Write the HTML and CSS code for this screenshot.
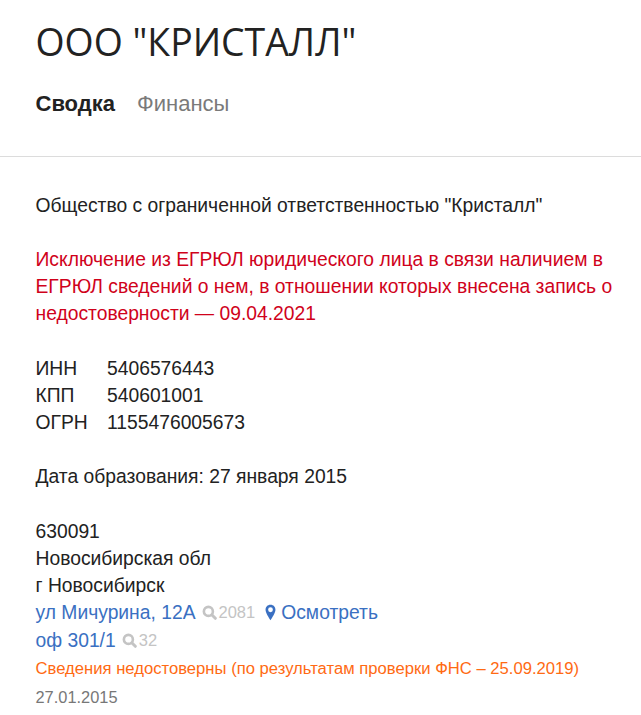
FILE: index.html
```html
<!DOCTYPE html>
<html lang="ru">
    <head>
        <meta charset="UTF-8">
        <meta name="viewport" content="width=device-width, initial-scale=1.0">
        <title>ООО "КРИСТАЛЛ"</title>
        <link rel="stylesheet" href="styles.css">
    </head>
    <body>
        <header class="head">
            <h1 class="title">ООО "КРИСТАЛЛ"</h1>
            <nav class="tabs">
                <a class="tab active" href="#">Сводка</a>
                <a class="tab" href="#">Финансы</a>
            </nav>
        </header>

        <main class="content">
            <p class="block">Общество с ограниченной ответственностью "Кристалл"</p>

            <p class="block status">Исключение из ЕГРЮЛ юридического лица в связи наличием в ЕГРЮЛ сведений о нем, в отношении которых внесена запись о недостоверности — 09.04.2021</p>

            <dl class="block codes">
                <dt>ИНН</dt><dd>5406576443</dd>
                <dt>КПП</dt><dd>540601001</dd>
                <dt>ОГРН</dt><dd>1155476005673</dd>
            </dl>

            <p class="block">Дата образования: 27 января 2015</p>

            <div class="address">
                <div>630091</div>
                <div>Новосибирская обл</div>
                <div>г Новосибирск</div>
                <div class="addr-row">
                    <a href="#">ул Мичурина, 12А</a>
                    <span class="count">
                        <svg class="ico-search" viewBox="0 0 16 16"><circle cx="6.8" cy="6.8" r="4.8" fill="none" stroke="currentColor" stroke-width="2.8"/><path d="M10.4 10.4 L14.2 14.2" stroke="currentColor" stroke-width="3.2" stroke-linecap="round"/></svg>2081</span>
                    <a class="map-link" href="#">
                        <svg class="ico-pin" viewBox="0 0 12 18"><path fill="currentColor" fill-rule="evenodd" d="M6 0.5C2.7 0.5 0.6 3 0.6 6 0.6 9.5 4.2 14.5 6 17.5 7.8 14.5 11.4 9.5 11.4 6 11.4 3 9.3 0.5 6 0.5ZM6 3.4A2.6 2.6 0 1 1 6 8.6 2.6 2.6 0 1 1 6 3.4Z"/></svg>Осмотреть</a>
                </div>
                <div class="addr-row">
                    <a href="#">оф 301/1</a>
                    <span class="count">
                        <svg class="ico-search" viewBox="0 0 16 16"><circle cx="6.8" cy="6.8" r="4.8" fill="none" stroke="currentColor" stroke-width="2.8"/><path d="M10.4 10.4 L14.2 14.2" stroke="currentColor" stroke-width="3.2" stroke-linecap="round"/></svg>32</span>
                </div>
                <div class="warn">Сведения недостоверны (по результатам проверки ФНС – 25.09.2019)</div>
                <div class="date">27.01.2015</div>
            </div>
        </main>
    </body>
</html>
```

FILE: styles.css
```css
*{
    margin: 0;
    padding: 0;
    box-sizing: border-box;
}

body{
    background: #fff;
    color: #222;
    font-family: "Liberation Sans", Arial, sans-serif;
    font-size: 19.3px;
    line-height: 27.2px;
    overflow: hidden;
}

a{
    color: #3a70c2;
    text-decoration: none;
}

.head{
    padding: 16px 35.5px 39px;
    border-bottom: 1px solid #dcdcdc;
}

.title{
    font-family: "Open Sans", sans-serif;
    font-size: 37.4px;
    font-weight: 400;
    line-height: 52px;
}

.tabs{
    display: flex;
    gap: 22px;
    margin-top: 22px;
    font-size: 22px;
}

.tab{
    color: #7a7a7a;
}

.tab.active{
    color: #222;
    font-weight: 700;
}

.content{
    padding: 34.3px 20px 0 35.5px;
}

.block{
    margin-bottom: 27.2px;
}

.status{
    color: #d0021b;
}

.codes{
    display: grid;
    grid-template-columns: 71.5px 1fr;
}

.addr-row{
    display: flex;
    align-items: center;
    height: 28px;
    padding-bottom: 2px;
}

.count{
    display: flex;
    align-items: center;
    margin-left: 6px;
    color: #c4c4c4;
    font-size: 16.5px;
}

.ico-search{
    width: 15px;
    height: 15px;
    margin-right: 2px;
}

.map-link{
    display: flex;
    align-items: center;
    margin-left: 10px;
}

.ico-pin{
    width: 11px;
    height: 17px;
    margin-right: 5px;
}

.warn{
    color: #ff6a13;
    font-size: 16.65px;
    line-height: 28px;
}

.date{
    color: #777;
    font-size: 16.4px;
    line-height: 28px;
}
```
